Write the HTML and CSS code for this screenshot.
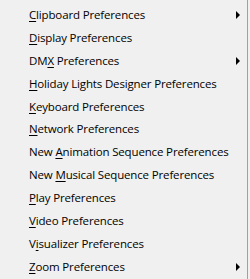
FILE: index.html
```html
<!DOCTYPE html>
<html lang="en">
<head>
    <meta charset="UTF-8">
    <title>Preferences</title>
    <link rel="stylesheet" href="styles.css">
</head>
<body>
    <div class="menu">
        <div class="item sub"><u>C</u>lipboard Preferences</div>
        <div class="item"><u>D</u>isplay Preferences</div>
        <div class="item sub">DM<u>X</u> Preferences</div>
        <div class="item"><u>H</u>oliday Lights Designer Preferences</div>
        <div class="item"><u>K</u>eyboard Preferences</div>
        <div class="item"><u>N</u>etwork Preferences</div>
        <div class="item">New <u>A</u>nimation Sequence Preferences</div>
        <div class="item">New <u>M</u>usical Sequence Preferences</div>
        <div class="item"><u>P</u>lay Preferences</div>
        <div class="item"><u>V</u>ideo Preferences</div>
        <div class="item">V<u>i</u>sualizer Preferences</div>
        <div class="item sub"><u>Z</u>oom Preferences</div>
    </div>
</body>
</html>
```
FILE: styles.css
```css
body {
    margin: 0;
    background: #f0f0f0;
}
.menu {
    width: 248px;
    height: 279px;
    box-sizing: border-box;
    padding-top: 3px;
    border-right: 1px solid #a0a0a0;
    font-family: "Open Sans", sans-serif;
    font-size: 11.5px;
    letter-spacing: -0.15px;
    color: #000;
}
.item {
    position: relative;
    height: 22.9px;
    line-height: 23px;
    padding-left: 29px;
    white-space: nowrap;
}
.item u {
    text-underline-offset: 2px;
}
.sub::after {
    content: "";
    position: absolute;
    left: 236px;
    top: 8px;
    border-left: 4px solid #000;
    border-top: 4px solid transparent;
    border-bottom: 4px solid transparent;
}
```
